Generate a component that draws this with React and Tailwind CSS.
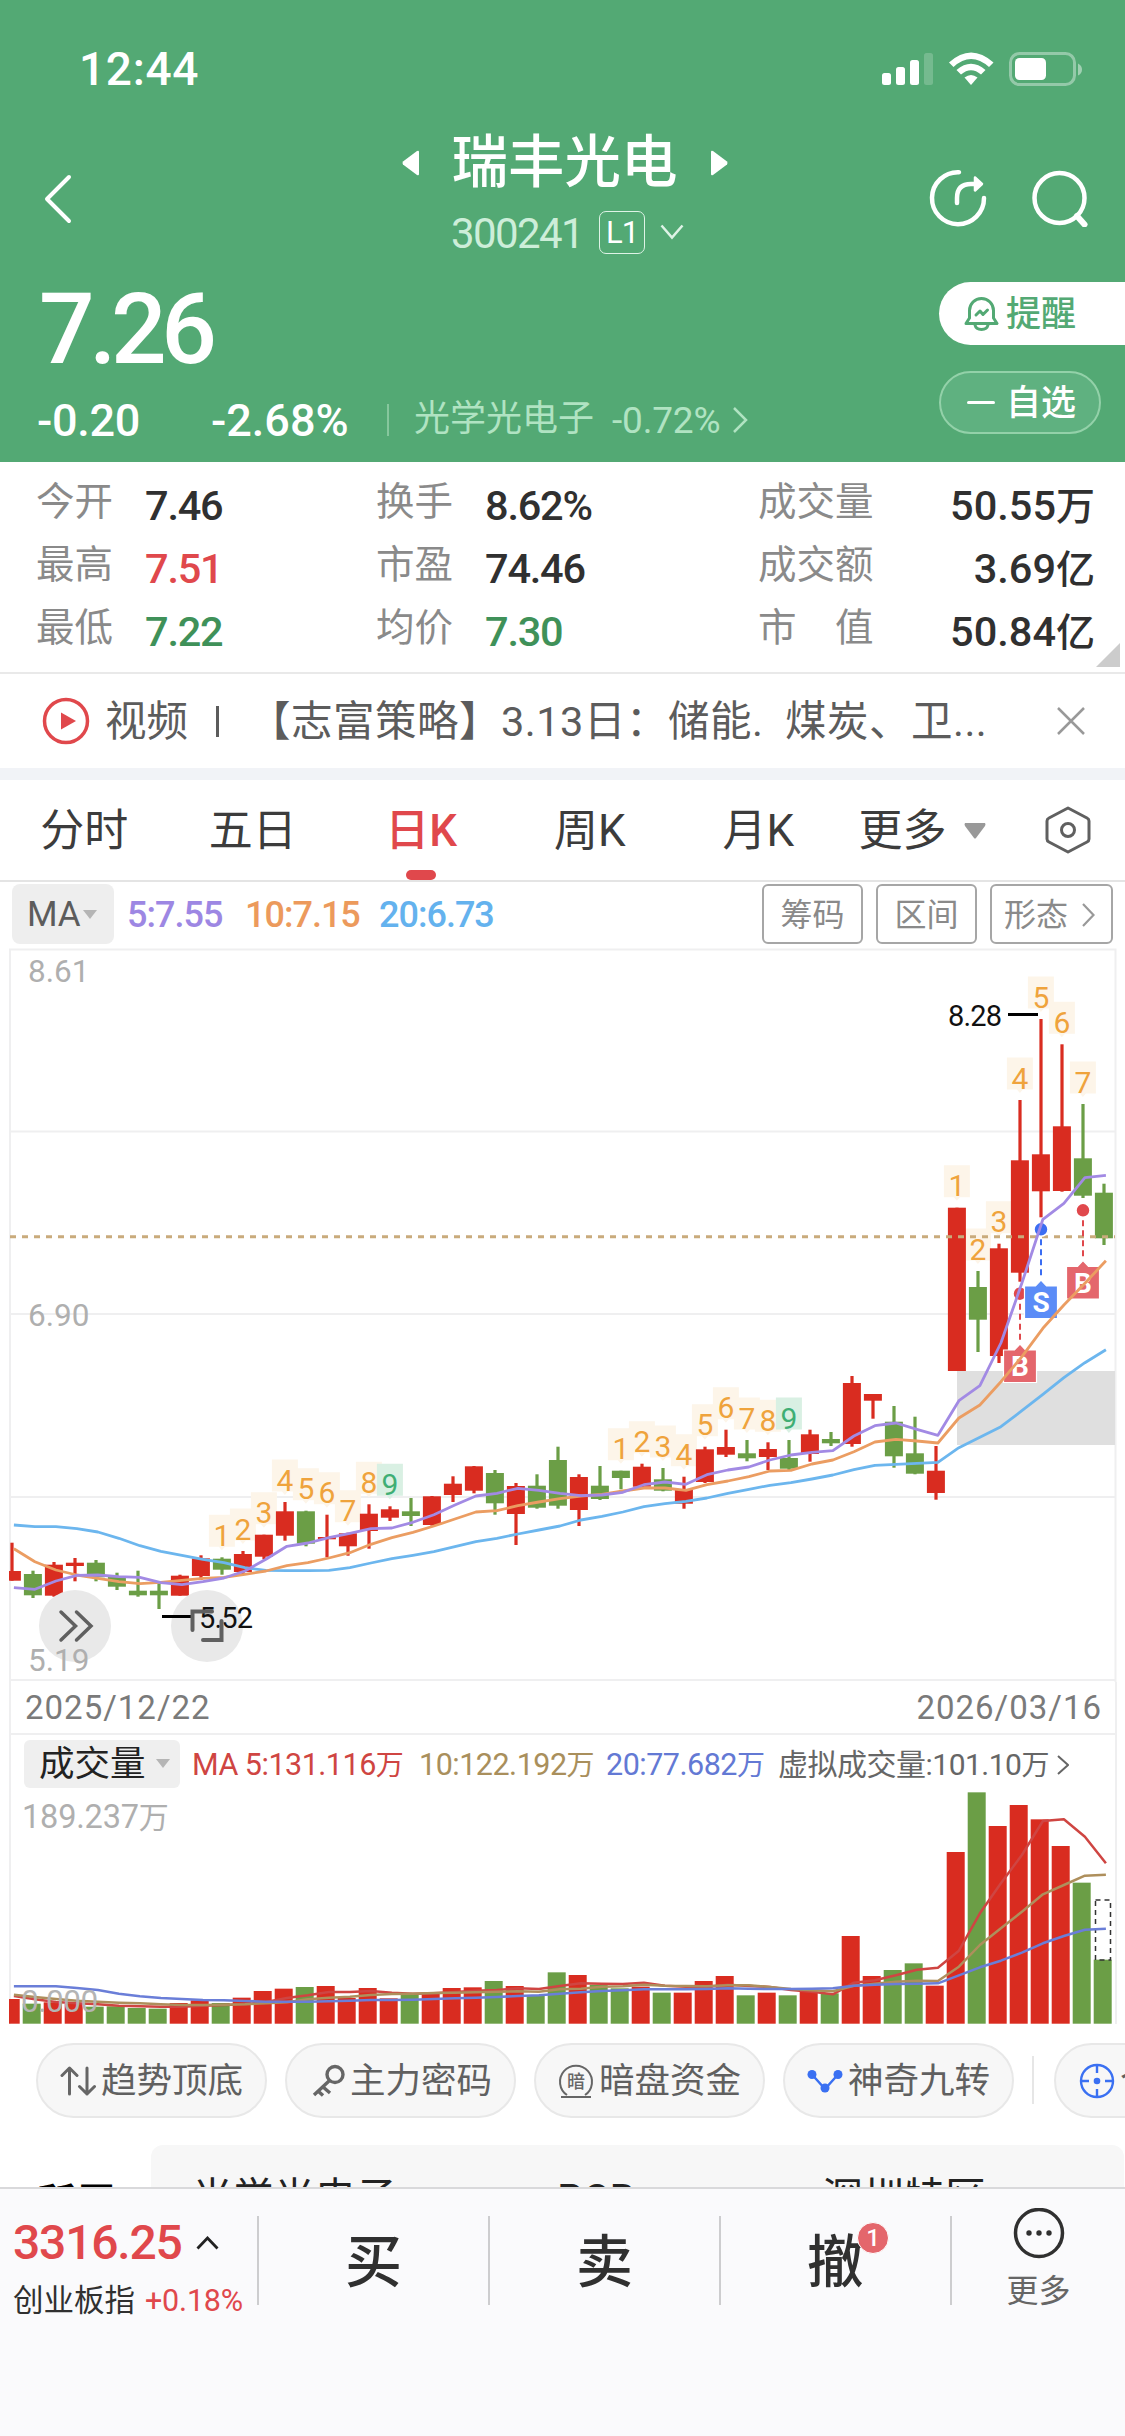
import clsx from "clsx";

const RED = "#d92c20";
const GREEN = "#6b9e46";

// [up, high, body top, body bottom, low]
const CANDLES = [
  [1, 594.7, 623, 632.7, 632.7],
  [0, 622.7, 626, 647.3, 650],
  [1, 614, 616.7, 647.7, 648.7],
  [1, 610, 614.7, 618, 633.3],
  [0, 612, 614.7, 629.3, 633.3],
  [0, 624.7, 628.7, 638.7, 642],
  [0, 622.7, 642.7, 647.3, 648.7],
  [0, 633.7, 642.7, 647.3, 661],
  [1, 626.7, 627.7, 647.7, 647.7],
  [1, 607.3, 610.3, 628, 632],
  [0, 609.3, 610.7, 621.7, 626.7],
  [1, 603, 606, 624, 626],
  [1, 586.7, 586.7, 608.7, 611.3],
  [1, 554, 563.3, 587.7, 592.7],
  [0, 562.7, 563.3, 595.7, 598.3],
  [1, 566.7, 589, 591.3, 609.3],
  [1, 584.7, 585.3, 598.3, 607.7],
  [1, 556.3, 565.7, 583, 600.7],
  [1, 558.3, 561.3, 569.7, 573],
  [0, 550, 563.3, 568, 578],
  [1, 548, 548.3, 577, 577.7],
  [1, 528.3, 535.7, 547, 554],
  [1, 518, 518.3, 542.7, 545.3],
  [0, 522, 525, 555.3, 566.7],
  [1, 535, 538, 566, 597],
  [0, 526.3, 537.7, 559.7, 560.7],
  [0, 498.7, 512, 557.7, 560.7],
  [1, 526.3, 529, 562, 578],
  [0, 518, 537.7, 551, 552],
  [0, 522.7, 522.7, 530, 541.3],
  [1, 515.7, 518.7, 538.7, 539.3],
  [0, 520, 531.3, 542.7, 543.3],
  [1, 528.7, 542, 555.7, 560.7],
  [1, 498.7, 501.3, 534, 535],
  [1, 481.7, 499, 506.7, 509],
  [0, 492, 505.3, 510.3, 513.3],
  [1, 494.3, 501, 509, 522],
  [0, 492, 510, 520.7, 522],
  [1, 481.7, 486.3, 506, 513.7],
  [0, 484, 491, 495.3, 498],
  [1, 428, 435, 496, 498.7],
  [1, 446, 446, 452.7, 470.7],
  [0, 458, 473.7, 508.3, 519.7],
  [0, 468.7, 505.3, 525.7, 526.3],
  [1, 498, 522.7, 545, 551.7],
  [1, 259.7, 259.7, 423, 423],
  [0, 323, 339, 371.7, 404],
  [1, 295.7, 300.3, 408, 415],
  [1, 152, 212.3, 324.7, 333.7],
  [1, 71, 206.3, 243.3, 269.3],
  [1, 96.3, 178.3, 243, 243.7],
  [0, 156, 210.3, 247.7, 250],
  [0, 235.7, 244.7, 290.3, 297],
];

const MA5 = [639.7, 641.3, 633, 627.3, 627, 628.7, 629.3, 634.7, 636.7, 633.7, 630, 623, 611.3, 598.3, 595, 589.7, 585.3, 580.7, 580, 574.3, 566.7, 557, 548, 545.3, 540.3, 542.3, 545.3, 547.7, 547, 544.3, 536.7, 534, 536.3, 526.7, 522, 519, 512, 507, 504.3, 502.7, 488, 477.7, 475, 481.3, 487.3, 452.7, 437.7, 395, 335, 271.3, 255.3, 229.7, 227.3];
const MA10 = [600.7, 613.7, 622, 627, 630.3, 633.7, 635.7, 634.3, 632.3, 630.3, 629.3, 626.3, 623, 617.7, 614.7, 610, 604.7, 596.3, 589.7, 584.3, 578, 571, 564, 562.7, 557.7, 554, 550.7, 548, 546.3, 543, 540, 540, 542.3, 536.7, 533, 528.7, 523, 522.3, 516, 512, 503.7, 494, 491.3, 493, 495, 470, 457, 433.7, 408.7, 380.3, 357, 335.3, 312.7];
const MA20 = [577, 578.7, 578.7, 580.7, 584, 590.3, 597.7, 603.3, 607.3, 611.3, 614.7, 619.7, 622.3, 622.7, 622.7, 622.3, 619.7, 615, 610.7, 607.3, 603.7, 598.7, 593.7, 590.3, 586, 582, 578, 572, 568.3, 564, 558.7, 555.7, 553.3, 550, 545.3, 541.3, 537.3, 534.7, 531, 527, 521.7, 517.3, 516.3, 515.3, 514.3, 499.7, 489.3, 478.7, 462.7, 446.3, 429.7, 414.7, 401.7];

// volume series, three units per pixel, measured down from the panel top
const VOLUMES = [957, 971, 967, 972, 980, 979, 984, 986, 969, 961, 969, 953, 933, 926, 921, 918, 954, 924, 955, 943, 942, 924, 922, 903, 918, 945, 877, 885, 914, 925, 920, 938, 938, 903, 888, 946, 938, 946, 935, 940, 768, 888, 870, 850, 917, 516, 337, 438, 375, 418, 498, 608, 839];
const VOL_MA5 = [948, 958, 966, 970, 973, 977, 979, 980, 980, 977, 975, 973, 966, 954, 946, 936, 936, 933, 938, 941, 940, 936, 932, 930, 925, 927, 918, 910, 911, 912, 908, 917, 920, 920, 914, 918, 921, 930, 935, 943, 908, 901, 886, 869, 863, 812, 700, 610, 525, 423, 418, 470, 550];
const VOL_MA10 = [944, 951, 957, 962, 965, 968, 970, 973, 975, 975, 974, 973, 970, 967, 958, 953, 950, 945, 942, 941, 939, 938, 937, 935, 934, 935, 928, 926, 920, 919, 914, 917, 918, 919, 916, 916, 921, 927, 931, 934, 917, 911, 905, 902, 903, 860, 795, 745, 695, 643, 615, 587, 584];
const VOL_MA20 = [919, 919, 919, 924, 930, 941, 949, 954, 957, 960, 961, 963, 965, 965, 965, 964, 962, 960, 960, 959, 957, 955, 953, 951, 948, 946, 941, 937, 933, 931, 928, 928, 928, 927, 925, 926, 927, 927, 926, 925, 917, 914, 912, 911, 910, 886, 862, 842, 818, 790, 768, 749, 746];

// nine-turn counters: [first candle, last count]
const TURNS = [
  [10, 9],
  [29, 9],
  [45, 7],
];

const cx = (i) => 11.9 + 21 * i;
const volY = (v) => (v - 330) / 3;
const line = (ys) => ys.map((y, i) => `${13.9 + 21 * i},${y.toFixed(1)}`).join(" ");

function StatusBar() {
  return (
    <div className="flex h-[138px] items-center justify-between pl-[79px] pr-[43px]">
      <span className="text-[46px] font-medium leading-none tracking-[0.700px]">12:44</span>
      <svg width="200" height="34" viewBox="0 0 200 34" fill="#fff">
        <rect x="0" y="21" width="9" height="12" rx="2.5" />
        <rect x="14" y="15" width="9" height="18" rx="2.5" />
        <rect x="28" y="8" width="9" height="25" rx="2.5" />
        <rect x="42" y="1" width="9" height="32" rx="2.5" opacity="0.2" />
        <path d="M67 10.5Q89 -9.500 111.500 10.500L107 15Q89 -1 71.500 15Z" />
        <path d="M74.500 18Q89 5.500 103.500 18L99 22.500Q89 14 79 22.500Z" />
        <path d="M82.500 25.500Q89 20.500 95.500 25.500L89 33Z" />
        <rect x="128.500" y="1.500" width="64" height="31" rx="9" fill="none" stroke="#fff" strokeWidth="3" opacity="0.38" />
        <rect x="133" y="6" width="31" height="22" rx="4.500" />
        <path d="M196 11.500Q200 13.500 200 17.500T196 23.500Z" opacity="0.45" />
      </svg>
    </div>
  );
}

function TitleBar() {
  return (
    <div className="flex h-[120px] justify-between pl-[44px] pr-[36px]">
      <svg className="mt-[36px]" width="156" height="50" viewBox="0 0 156 50" fill="none" stroke="#fff" strokeWidth="4" strokeLinecap="round" strokeLinejoin="round">
        <path d="M25 3L3 25L25 47" />
      </svg>
      <div className="flex flex-col items-center">
        <div className="flex h-[50px] items-center gap-[32px]">
          <svg width="18" height="26" viewBox="0 0 18 26" fill="#fff"><path d="M17 2V24Q17 26 15 25L1 14.500Q0 13 1 11.500L15 1Q17 0 17 2Z" /></svg>
          <h1 className="text-[56.500px] font-medium leading-none">瑞丰光电</h1>
          <svg width="18" height="26" viewBox="0 0 18 26" fill="#fff"><path d="M1 2V24Q1 26 3 25L17 14.500Q18 13 17 11.500L3 1Q1 0 1 2Z" /></svg>
        </div>
        <div className="mt-[21px] flex h-[46px] items-center pl-[6px]">
          <span className="mt-[3px] text-[42px] leading-none tracking-[-1.600px] text-[#cdeed9]">300241</span>
          <span className="ml-[16px] flex h-[43px] w-[46px] items-center justify-center rounded-[7px] border border-[#def3e6] text-[31px] leading-none tracking-[-1px]">L1</span>
          <svg className="ml-[15px]" width="24" height="16" viewBox="0 0 24 16" fill="none" stroke="#def3e6" strokeWidth="2.500"><path d="M1.500 1.500L12 13.500L22.500 1.500" /></svg>
        </div>
      </div>
      <div className="flex gap-[44px] pt-[31px]">
        <svg width="58" height="58" viewBox="0 0 58 58" fill="none" stroke="#fff" strokeWidth="4.500" strokeLinecap="round" strokeLinejoin="round">
          <path d="M30 3.200A26 26 0 1 0 55 29" />
          <path d="M28 34V29Q28 15 42 15H50" />
          <path d="M46 8.500L53 15L46 21.500Z" fill="#fff" strokeWidth="2.500" />
        </svg>
        <svg width="58" height="58" viewBox="0 0 58 58" fill="none" stroke="#fff" strokeWidth="4.500" strokeLinecap="round">
          <circle cx="28.500" cy="29" r="25" />
          <path d="M46 47L53.500 55.500" strokeWidth="6" />
        </svg>
      </div>
    </div>
  );
}

function Header() {
  return (
    <header className="h-[462px] bg-[#53a974] text-white">
      <StatusBar />
      <TitleBar />
      <div className="flex justify-between">
        <div className="pl-[37px]">
          <div className="mt-[22px] flex h-[100px] items-center pl-[2px] text-[98px] font-medium leading-none tracking-[-5.500px]">7.26</div>
          <div className="mt-[18px] flex h-[44px] items-center leading-none">
            <span className="w-[174px] text-[45px] font-medium tracking-[-0.300px]">-0.20</span>
            <span className="w-[176px] text-[45px] font-medium">-2.68%</span>
            <span className="h-[32px] w-[2px] bg-[#86c79d]" />
            <span className="-mt-[2px] ml-[25px] text-[36px] text-[#b0e3c2]">光学光电子</span>
            <span className="ml-[18px] text-[37px] text-[#b0e3c2] tracking-[-0.200px]">-0.72%</span>
            <svg className="ml-[12px]" width="16" height="28" viewBox="0 0 16 28" fill="none" stroke="#b0e3c2" strokeWidth="2.500"><path d="M2 2L14 14L2 26" /></svg>
          </div>
        </div>
        <div className="flex w-[186px] flex-col pt-[24px] text-[35px] font-medium leading-none">
          <div className="flex h-[63px] items-center rounded-l-full bg-white pl-[25px] text-[#53a974]">
            <svg className="mr-[7px]" width="35" height="36" viewBox="0 0 35 36" fill="none" stroke="#53a974" strokeWidth="3" strokeLinejoin="round" strokeLinecap="round">
              <path d="M2 27.500L5.500 22V14.500A12 12 0 0 1 29.500 14.500V22L33 27.500Z" />
              <path d="M11 29Q12 33.500 17.500 33.500T24 29" />
              <path d="M12 19L16 15L19 18.500L23.500 14" />
            </svg>
            <span className="mt-[2px]">提醒</span>
          </div>
          <div className="mt-[26px] flex h-[63px] w-[162px] items-center rounded-full border-2 border-[#93d1a9] bg-[#5fb180] pl-[26px]">
            <span className="mr-[11px] h-[3px] w-[28px] rounded-full bg-white" />
            <span className="mt-[2px]">自选</span>
          </div>
        </div>
      </div>
    </header>
  );
}

const STATS = [
  ["今开", "7.46", "text-[#303030]", "换手", "8.62%", "text-[#303030]", "成交量", "50.55", "万"],
  ["最高", "7.51", "text-[#e0484c]", "市盈", "74.46", "text-[#303030]", "成交额", "3.69", "亿"],
  ["最低", "7.22", "text-[#3f9159]", "均价", "7.30", "text-[#3f9159]", "市　值", "50.84", "亿"],
];

function Stats() {
  return (
    <section className="relative h-[212px] border-b-2 border-[#e9e9e9] pt-[9px]">
      {STATS.map(([a, av, ac, b, bv, bc, c, cv, unit]) => (
        <div key={a} className="grid h-[63px] grid-cols-[340px_382px_1fr] items-center pl-[36px] pr-[30px] text-[38.500px] leading-none text-[#8a8a8a]">
          <div className="flex items-center">
            <span className="w-[109px]">{a}</span>
            <span className={clsx("mt-[6px] text-[41.500px] font-medium tracking-[-1.200px]", ac)}>{av}</span>
          </div>
          <div className="flex items-center">
            <span className="w-[109px]">{b}</span>
            <span className={clsx("mt-[6px] text-[41.500px] font-medium tracking-[-1.200px]", bc)}>{bv}</span>
          </div>
          <div className="flex items-center justify-between">
            <span>{c}</span>
            <span className="mt-[6px] text-[41.500px] font-medium text-[#303030]">{cv}<span className="text-[39px]">{unit}</span></span>
          </div>
        </div>
      ))}
      <svg className="absolute bottom-[5px] right-[5px]" width="24" height="24" viewBox="0 0 24 24"><path d="M24 0V24H0Z" fill="#ccc" /></svg>
    </section>
  );
}

function NewsBar() {
  return (
    <div className="flex h-[106px] items-center border-b-[12px] border-[#f1f3f7] pl-[42px] pr-[40px] text-[41.500px] leading-none text-[#5c5c5c]">
      <svg width="48" height="48" viewBox="0 0 48 48"><circle cx="24" cy="24" r="21.500" fill="none" stroke="#e0484c" strokeWidth="3.500" /><path d="M19 15.500L34 24L19 32.500Z" fill="#e0484c" /></svg>
      <span className="ml-[15px] mt-[2px]">视频</span>
      <span className="ml-[28px] h-[31px] w-[3px] bg-[#5c5c5c]" />
      <span className="ml-[30px] mt-[2px] whitespace-nowrap tracking-[0.500px]">【志富策略】3.13日：储能. &nbsp;煤炭、卫...</span>
      <svg className="ml-auto" width="28" height="28" viewBox="0 0 28 28" stroke="#999" strokeWidth="2.500"><path d="M1 1L27 27M27 1L1 27" /></svg>
    </div>
  );
}

const TABS = ["分时", "五日", "日K", "周K", "月K"];

function Tabs() {
  return (
    <nav className="flex h-[102px] border-b-2 border-[#e4e4e4] text-[44px] leading-none text-[#3c3c3c]">
      {TABS.map((t) => (
        <div key={t} className={clsx("relative flex w-[168.500px] items-center justify-center pt-[2px]", t === "日K" && "font-medium text-[#e0484c]")}>
          {t}
          {t === "日K" && <span className="absolute bottom-0 h-[10px] w-[30px] rounded-[5px] bg-[#e0484c]" />}
        </div>
      ))}
      <div className="ml-[16px] flex items-center pt-[2px]">
        更多
        <svg className="ml-[17px]" width="22" height="16" viewBox="0 0 22 16"><path d="M1 0H21Q22 1 21 3L12 15Q11 16 10 15L1 3Q0 1 1 0Z" fill="#999" /></svg>
      </div>
      <svg className="ml-auto mr-[34px] self-center" width="46" height="48" viewBox="0 0 46 48" fill="none" stroke="#606060" strokeWidth="3" strokeLinejoin="round">
        <path d="M23 2L42 12Q44 13 44 15V33Q44 35 42 36L23 46L4 36Q2 35 2 33V15Q2 13 4 12Z" />
        <circle cx="23" cy="24" r="6.500" />
      </svg>
    </nav>
  );
}

function IndicatorBar() {
  return (
    <div className="flex h-[66px] items-start pl-[12px] pr-[12px] pt-[2px] leading-none">
      <div className="flex h-[60px] w-[102px] items-center rounded-[8px] bg-[#eee] pl-[15px] text-[35px] text-[#5c5c5c]">
        MA
        <svg className="ml-[2px]" width="14" height="9" viewBox="0 0 14 9"><path d="M0 0H14L7 9Z" fill="#b5b5b5" /></svg>
      </div>
      <div className="flex h-[60px] items-center pl-[13px] pt-[2px] text-[36px] font-medium tracking-[-1px]">
        <span className="w-[118px] text-[#9d87e3]">5:7.55</span>
        <span className="w-[134px] text-[#ec9a5c]">10:7.15</span>
        <span className="text-[#64b2ee]">20:6.73</span>
      </div>
      <div className="ml-auto flex gap-[13px] text-[32px] text-[#8a8a8a]">
        <span className="flex h-[60px] w-[101px] items-center justify-center rounded-[6px] border-2 border-[#a6a6a6] pt-[2px]">筹码</span>
        <span className="flex h-[60px] w-[101px] items-center justify-center rounded-[6px] border-2 border-[#a6a6a6] pt-[2px]">区间</span>
        <span className="flex h-[60px] w-[123px] items-center justify-center rounded-[6px] border-2 border-[#a6a6a6] pr-[4px] pt-[2px]">
          形态
          <svg className="ml-[14px]" width="13" height="24" viewBox="0 0 13 24" fill="none" stroke="#999" strokeWidth="2.200"><path d="M1 1L11.500 12L1 23" /></svg>
        </span>
      </div>
    </div>
  );
}

function TurnTag({ i, n }) {
  const x = cx(i);
  const bottom = CANDLES[i][1] - 10.5;
  const last = n === 9;
  return (
    <g>
      <path d={`M${x - 13} ${bottom - 32}h26v32h-10l-3 3.500l-3 -3.500h-10Z`} fill={last ? "#d9f0e3" : "#fdf5e9"} />
      <text x={x} y={bottom - 1} fontSize="30" textAnchor="middle" fill={last ? "#3fae74" : "#efa33c"}>{n}</text>
    </g>
  );
}

function TradeMark({ x, top, dot, label, fill, dotFill }) {
  return (
    <g>
      <path d={`M${x} ${dot + 10}V${top - 9}`} stroke={dotFill} strokeWidth="2" strokeDasharray="6 4" />
      <circle cx={x} cy={dot} r="7" fill={dotFill} stroke="#fff" strokeWidth="1.500" />
      <path d={`M${x - 16.500} ${top}h11l5.500 -6l5.500 6h11v32.500h-33Z`} fill={fill} stroke="#fff" strokeWidth="1.200" />
      <text x={x} y={top + 26} fontSize="28" fontWeight="700" textAnchor="middle" fill="#fff">{label}</text>
    </g>
  );
}

function CandleChart() {
  return (
    <svg className="block" width="1125" height="734" viewBox="0 0 1125 734">
      <g stroke="#efeff0" strokeWidth="2" fill="none">
        <path d="M10 734V1.500H1115.500V734" />
        <path d="M10 183.500H1115M10 366H1115M10 549H1115M10 732H1115" />
      </g>
      <g fontSize="31.500" fill="#afafaf">
        <text x="28" y="34">8.61</text>
        <text x="28" y="378">6.90</text>
      </g>
      <rect x="957" y="423" width="158" height="74" fill="#dfdfdf" />
      {TURNS.map(([start, count]) =>
        Array.from({ length: count }, (_, k) => <TurnTag key={start + k} i={start + k} n={k + 1} />)
      )}
      {CANDLES.map(([up, high, top, bottom, low], i) => {
        const left = Math.max(cx(i) - 9, 9);
        return (
          <g key={i} fill={up ? RED : GREEN}>
            <rect x={cx(i) - 1.5} y={high} width="3.200" height={low - high} />
            <rect x={left} y={top} width={cx(i) + 9 - left} height={bottom - top} />
          </g>
        );
      })}
      <path d="M10 288.700H1115" stroke="#c9ab7c" strokeWidth="3" strokeDasharray="6 6" />
      <TradeMark x={1020} top={402} dot={345.700} label="B" fill="#e4666c" dotFill="#e0484c" />
      <TradeMark x={1041} top={338} dot={281.300} label="S" fill="#5b8cf7" dotFill="#3b6df2" />
      <TradeMark x={1083} top={318.500} dot={262.300} label="B" fill="#e4666c" dotFill="#e0484c" />
      <g fill="none" strokeWidth="2.800" strokeLinejoin="round">
        <polyline points={line(MA20)} stroke="#6cb6ee" />
        <polyline points={line(MA10)} stroke="#eb9d62" />
        <polyline points={line(MA5)} stroke="#a28ae4" />
      </g>
      <g fill="#e9e9e9">
        <circle cx="75" cy="678" r="36" />
        <circle cx="207" cy="678" r="36" />
      </g>
      <g fontSize="29" fill="#111" letterSpacing="-0.800">
        <text x="948" y="78">8.28</text>
        <text x="199" y="680">5.52</text>
      </g>
      <path d="M1008 66.500H1038M162 668.500H192" stroke="#000" strokeWidth="3" />
      <text x="28" y="723" fontSize="31.500" fill="#afafaf">5.19</text>
      <g fill="none" stroke="#606060" strokeWidth="4" strokeLinecap="round">
        <path d="M61 664L75.500 678L61 692M76.500 664L91 678L76.500 692" strokeWidth="3.500" />
        <path d="M212 663.500H192.500V682M203 692H221.500V673" />
      </g>
    </svg>
  );
}

function DateAxis() {
  return (
    <div className="mx-[9px] mr-[8px] flex h-[53px] items-center justify-between border-x-2 border-b-2 border-[#efeff0] pl-[14px] pr-[13px] text-[33px] leading-none tracking-[1px] text-[#7a7a7a]">
      <span>2025/12/22</span>
      <span>2026/03/16</span>
    </div>
  );
}

function VolumePanel() {
  return (
    <section className="mx-[9px] mr-[8px] border-x-2 border-[#efeff0]">
      <div className="flex h-[55px] items-center whitespace-nowrap pl-[13px] text-[30.500px] leading-none">
        <div className="mt-[2px] flex h-[48px] w-[156px] items-center rounded-[6px] bg-[#efefef] pl-[15px] text-[35.500px] text-[#222]">
          <span className="mt-[2px]">成交量</span>
          <svg className="ml-[10px]" width="14" height="9" viewBox="0 0 14 9"><path d="M0 0H14L7 9Z" fill="#b5b5b5" /></svg>
        </div>
        <div className="mt-[5px] flex items-center tracking-[-0.500px]">
          <span className="ml-[12px] w-[227px] text-[#cf4542]">MA 5:131.116<span className="text-[28px]">万</span></span>
          <span className="w-[187px] text-[#a98f5c]">10:122.192<span className="text-[28px]">万</span></span>
          <span className="w-[172px] text-[#6379d4]">20:77.682<span className="text-[28px]">万</span></span>
          <span className="text-[30px] text-[#666]">虚拟成交量:101.10<span className="text-[28px]">万</span></span>
          <svg className="ml-[8px]" width="12" height="20" viewBox="0 0 12 20" fill="none" stroke="#666" strokeWidth="2"><path d="M1 1L11 10L1 19" /></svg>
        </div>
      </div>
      <svg className="-ml-[11px] block" width="1117" height="234" viewBox="0 0 1117 234">
        <text x="22" y="38" fontSize="32.500" letterSpacing="-0.200" fill="#afafaf">189.237<tspan fontSize="30">万</tspan></text>
        {VOLUMES.map((v, i) => {
          const left = Math.max(1.7 + 21 * i, 9);
          return <rect key={i} x={left} y={volY(v)} width={19.7 + 21 * i - left} height={233.7 - volY(v)} fill={CANDLES[i][0] ? RED : GREEN} />;
        })}
        <rect x="1095.500" y="110" width="15" height="60" fill="none" stroke="#333" strokeWidth="1.500" strokeDasharray="5 4" />
        <g fill="none" strokeWidth="2.500" strokeLinejoin="round">
          <polyline points={line(VOL_MA5.map(volY))} stroke="#cf4542" />
          <polyline points={line(VOL_MA10.map(volY))} stroke="#ae8f5c" />
          <polyline points={line(VOL_MA20.map(volY))} stroke="#6a7ed8" />
        </g>
        <text x="21" y="222" fontSize="31.500" letterSpacing="-0.500" fill="#b4b4b4">0.000</text>
      </svg>
    </section>
  );
}

const CHIPS = [
  {
    label: "趋势顶底",
    icon: (
      <g stroke="#666" strokeWidth="3" strokeLinecap="round" strokeLinejoin="round">
        <path d="M9.500 31V5M2 12.500L9.500 5L17 12.500" />
        <path d="M27 5V31M19.500 23.500L27 31L34.500 23.500" />
      </g>
    ),
  },
  {
    label: "主力密码",
    icon: (
      <g stroke="#666" strokeWidth="3.400">
        <circle cx="26" cy="11.500" r="8" />
        <path d="M20 18L5 32M13.500 23.500L21 30M9 28L14 32.500" />
      </g>
    ),
  },
  {
    label: "暗盘资金",
    icon: (
      <g stroke="#666" strokeWidth="2">
        <path d="M9 32A16 16 0 1 1 27 32M3 34H33" />
        <text x="18" y="24.500" fontSize="18" fontWeight="500" textAnchor="middle" fill="#666" stroke="none">暗</text>
      </g>
    ),
  },
  {
    label: "神奇九转",
    icon: (
      <g stroke="#3a70f2" strokeWidth="2.500">
        <path d="M5 11.500L18 26L31 11.500" />
        <g fill="#3a70f2" stroke="none"><circle cx="5" cy="11.500" r="4.500" /><circle cx="18" cy="25" r="4.500" /><circle cx="31" cy="11.500" r="4.500" /></g>
      </g>
    ),
  },
];

function Chips() {
  return (
    <div className="flex h-[121px] items-start gap-[18px] overflow-hidden pl-[36px] pt-[19px] text-[35.500px] leading-none text-[#606060]">
      {CHIPS.map((c) => (
        <div key={c.label} className="flex h-[75px] w-[231px] shrink-0 items-center justify-end rounded-full border-2 border-[#e8e8e8] bg-[#f7f7f7] pr-[22px]">
          <svg className="mr-[5px]" width="36" height="36" viewBox="0 0 36 36" fill="none">{c.icon}</svg>
          <span className="mt-[2px]">{c.label}</span>
        </div>
      ))}
      <span className="mr-[2px] mt-[13px] h-[48px] w-[2px] shrink-0 bg-[#e6e6e6]" />
      <div className="flex h-[75px] w-[231px] shrink-0 items-center rounded-full border-2 border-[#e8e8e8] bg-[#f7f7f7] pl-[23px]">
        <svg className="mr-[5px]" width="36" height="36" viewBox="0 0 36 36" fill="none" stroke="#3a70f2" strokeWidth="2.400">
          <circle cx="18" cy="18" r="16" />
          <path d="M18 2V10M18 26V34M2 18H10M26 18H34" />
          <circle cx="18" cy="18" r="3.300" fill="#3a70f2" stroke="none" />
        </svg>
        个股
      </div>
    </div>
  );
}

function Sectors() {
  return (
    <div className="flex h-[42px] overflow-hidden text-[41px] leading-none text-[#222]">
      <div className="w-[151px] shrink-0 pl-[36px] pt-[39px] text-[40px] font-bold text-black">所属</div>
      <div className="h-[120px] w-[973px] shrink-0 rounded-[12px] bg-[#f7f7f7] pl-[41px] pt-[33px]">
        <div className="grid grid-cols-[365px_265px_1fr]">
          <span>光学光电子</span>
          <span className="pt-px">PCB</span>
          <span>深圳特区</span>
        </div>
      </div>
    </div>
  );
}

function ActionCell({ children }) {
  return <button className="h-[89px] w-[231px] border-l-2 border-[#cdcdcf] pt-[4px] text-[57px] font-medium leading-none text-[#303030]">{children}</button>;
}

function BottomBar() {
  return (
    <footer className="flex h-[249px] border-t-2 border-[#d9d9db] bg-[#fafafc] pt-[27px] leading-none">
      <div className="w-[257px] pl-[13px] pt-[2px]">
        <div className="flex h-[50px] items-center text-[48px] font-medium tracking-[-1.200px] text-[#e0484c]">
          3316.25
          <svg className="ml-[14px]" width="23" height="14" viewBox="0 0 23 14" fill="none" stroke="#222" strokeWidth="2.800"><path d="M1.500 12.500L11.500 2L21.500 12.500" /></svg>
        </div>
        <div className="mt-[16px] flex h-[34px] items-center whitespace-nowrap text-[30.500px] text-[#303030]">
          创业板指<span className="ml-[10px] tracking-[-0.200px] text-[#e0484c]">+0.18%</span>
        </div>
      </div>
      <ActionCell>买</ActionCell>
      <ActionCell>卖</ActionCell>
      <ActionCell>
        <span className="relative">
          撤
          <span className="absolute -right-[25px] -top-[7px] flex h-[32px] w-[32px] items-center justify-center rounded-full border border-white bg-[#e4666c] text-[24px] text-white">1</span>
        </span>
      </ActionCell>
      <div className="flex h-[89px] flex-1 flex-col items-center border-l-2 border-[#cdcdcf] text-[32px] text-[#666]">
        <svg className="-mt-[8px] shrink-0" width="52" height="52" viewBox="0 0 52 52" fill="#303030">
          <circle cx="26" cy="25" r="23.500" fill="none" stroke="#303030" strokeWidth="3.500" />
          <circle cx="16" cy="25" r="2.700" /><circle cx="26" cy="25" r="2.700" /><circle cx="36" cy="25" r="2.700" />
        </svg>
        <span className="mt-[15px]">更多</span>
      </div>
    </footer>
  );
}

export default function App() {
  return (
    <div className="h-[2436px] w-[1125px] overflow-hidden bg-white font-[Roboto,'Noto_Sans_CJK_SC',sans-serif]">
      <Header />
      <Stats />
      <NewsBar />
      <Tabs />
      <IndicatorBar />
      <CandleChart />
      <DateAxis />
      <VolumePanel />
      <Chips />
      <Sectors />
      <BottomBar />
    </div>
  );
}
